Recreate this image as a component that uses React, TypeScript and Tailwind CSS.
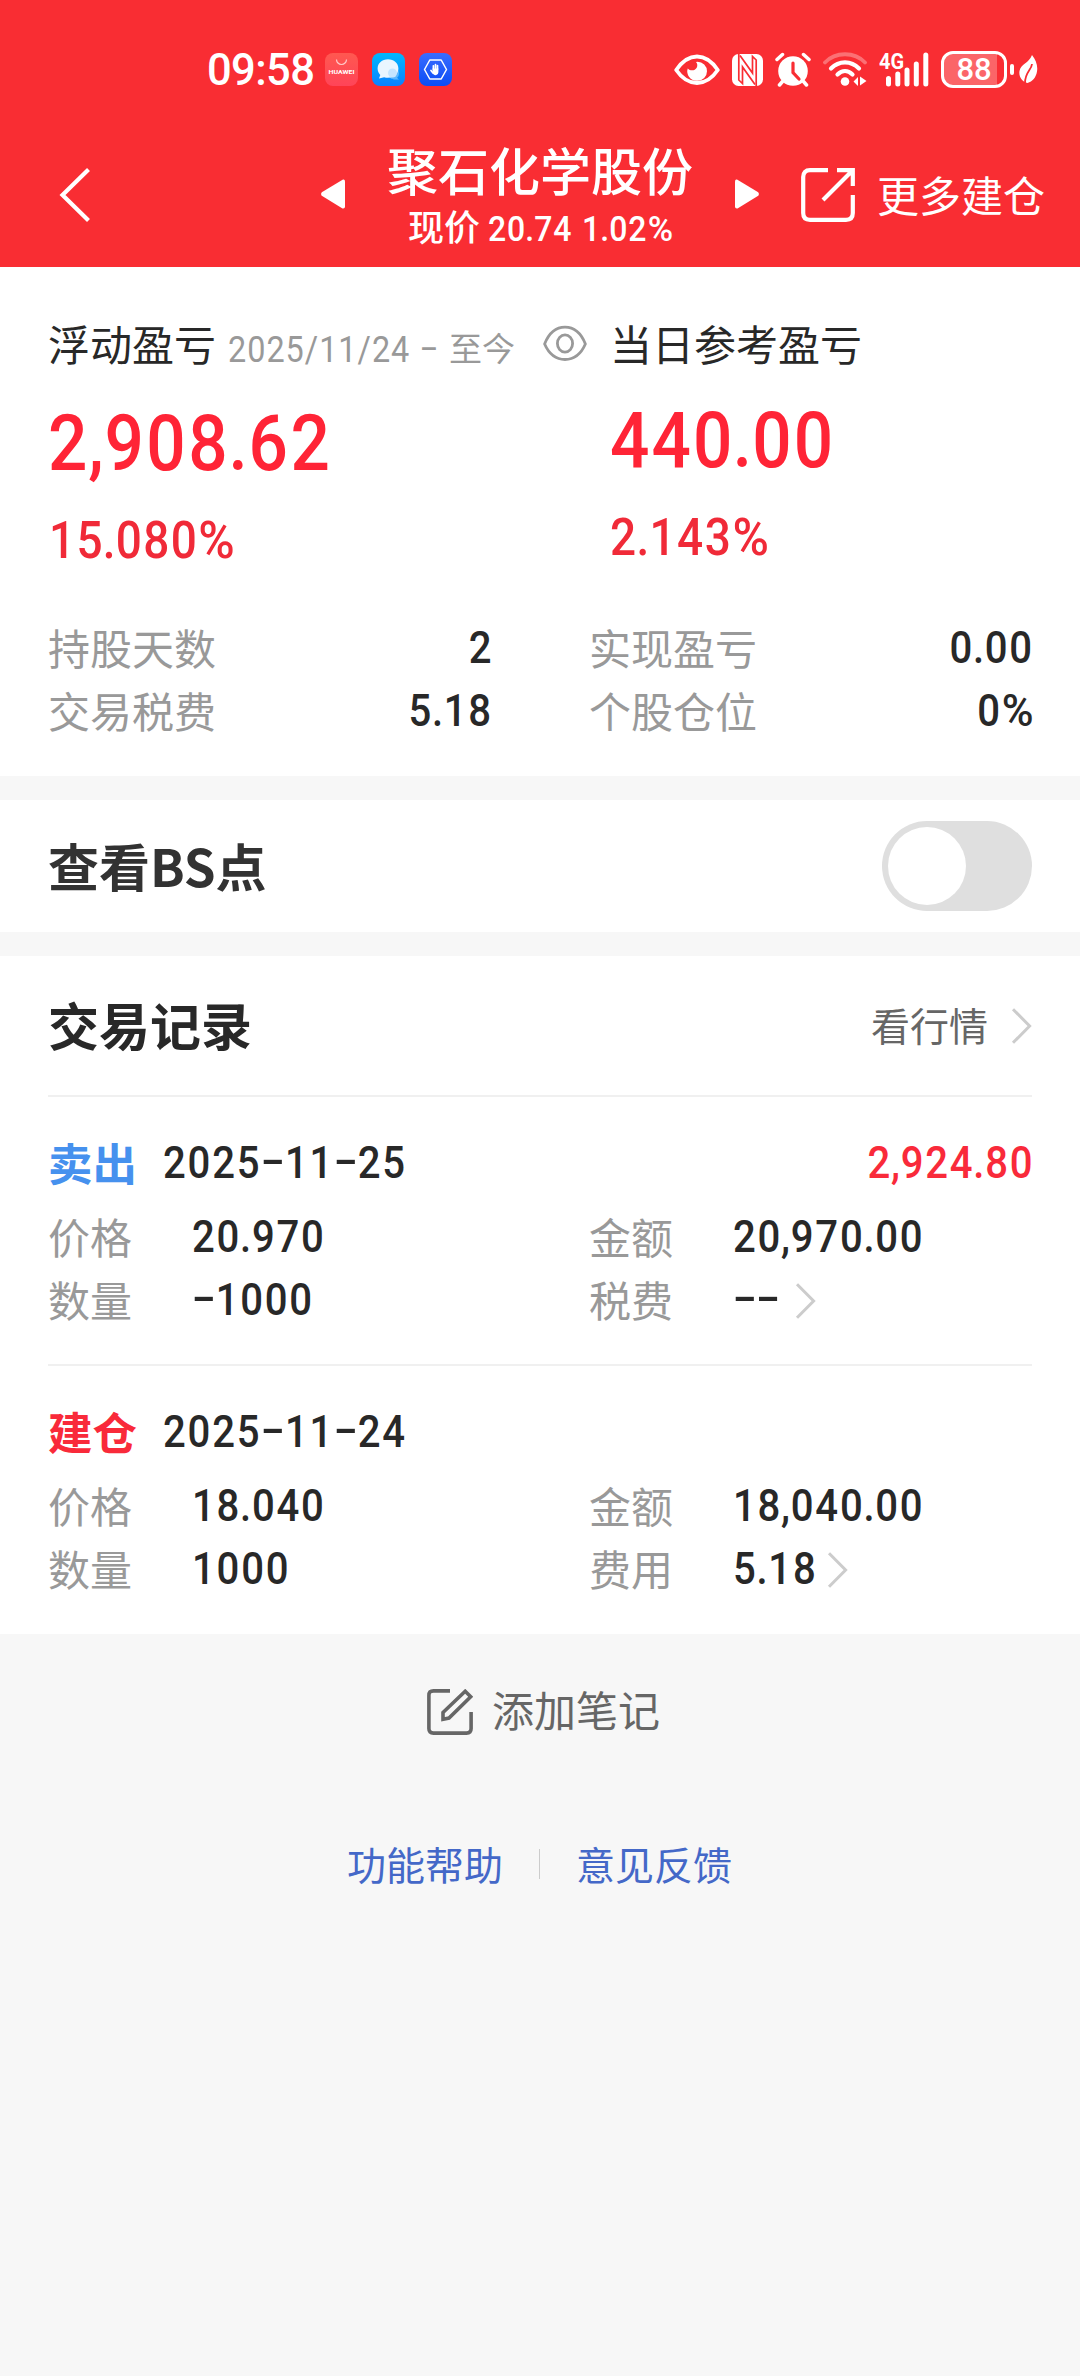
import React from "react";

const CJK = "font-['Noto_Sans_CJK_SC',sans-serif]";

/* Condensed numerals: hyphens take figure width, separators sit tight, percent signs are wide. */
function Num({ children, className = "" }: { children: string; className?: string }) {
  return (
    <span className={`inline-block shrink-0 scale-x-90 whitespace-nowrap font-['Roboto',sans-serif] font-medium ${className}`}>
      {children.split(/([-.,%])/).map((part, i) => {
        if (part === "-") {
          return (
            <span key={i} className="inline-block w-[0.59em] origin-center -translate-y-[0.06em] scale-x-[1.75] text-center tracking-normal">
              -
            </span>
          );
        }
        if (part === "." || part === ",") {
          return (
            <span key={i} className="-mx-[0.027em]">
              {part}
            </span>
          );
        }
        if (part === "%") {
          return (
            <span key={i} className="inline-block w-[0.81em] origin-left scale-x-[1.08] tracking-normal">
              %
            </span>
          );
        }
        return part;
      })}
    </span>
  );
}

function RowNum({ children, right = false, className = "" }: { children: string; right?: boolean; className?: string }) {
  return (
    <Num className={`mt-[3px] text-[44.5px] leading-[63px] tracking-[2px] ${right ? "-mr-[2px] origin-right" : "origin-left"} ${className}`}>
      {children}
    </Num>
  );
}

function Chevron({ className = "" }: { className?: string }) {
  return (
    <svg className={`h-[36px] w-[21px] shrink-0 ${className}`} viewBox="0 0 21 36" fill="none" stroke="#cccccc" strokeWidth="3">
      <path d="M2 1.2 18.6 18 2 34.8" />
    </svg>
  );
}

function StatusBar() {
  return (
    <div className="flex h-[139px] items-center pl-[207px] text-white">
      <span className="mt-[3px] w-[118px] shrink-0 font-['Roboto',sans-serif] text-[43.5px] leading-[44px] font-medium tracking-[-0.6px]">09:58</span>
      <div className="flex gap-[14px]">
        <svg className="h-[33px] w-[33px]" viewBox="0 0 33 33">
          <defs>
            <linearGradient id="store" x1="0" y1="0" x2="0" y2="1">
              <stop offset="0" stopColor="#ff5850" />
              <stop offset="1" stopColor="#ff4458" />
            </linearGradient>
          </defs>
          <rect width="33" height="33" rx="8" fill="url(#store)" />
          <path d="M11.5 6.5a5 5 0 0 0 10 0" fill="none" stroke="#ffc9c9" strokeWidth="1.2" />
          <text x="16.5" y="21" textAnchor="middle" textLength="26" lengthAdjust="spacingAndGlyphs" fill="#fff" fontFamily="Roboto" fontWeight="700" fontSize="5.6">HUAWEI</text>
        </svg>
        <svg className="h-[33px] w-[33px]" viewBox="0 0 33 33">
          <defs>
            <linearGradient id="msg" x1="0" y1="0" x2="0" y2="1">
              <stop offset="0" stopColor="#00b8ff" />
              <stop offset="1" stopColor="#0a80ff" />
            </linearGradient>
          </defs>
          <rect width="33" height="33" rx="8" fill="url(#msg)" />
          <circle cx="21.5" cy="20.5" r="5.5" fill="#5cb8ff" />
          <path d="m24 24 3 2.4-6 .1z" fill="#5cb8ff" />
          <path d="M16 6.2c6 0 10.4 4 10.4 9.3s-4.400 9.300-10.400 9.300c-1.400 0-2.700-.2-3.900-.6L7 25.500l1.300-3.600c-1.700-1.700-2.700-3.900-2.700-6.400 0-5.300 4.400-9.300 10.400-9.300z" fill="#eaf6ff" />
          <circle cx="20.5" cy="20" r="4.5" fill="#c4e5ff" />
        </svg>
        <svg className="h-[33px] w-[33px]" viewBox="0 0 33 33">
          <defs>
            <linearGradient id="guard" x1="0" y1="0" x2="0" y2="1">
              <stop offset="0" stopColor="#3a6cff" />
              <stop offset="1" stopColor="#0a4cf5" />
            </linearGradient>
          </defs>
          <rect width="33" height="33" rx="8" fill="url(#guard)" />
          <path d="M5.5 16.5 10.8 7h11.4l5.3 9.5-5.3 9.5H10.8z" fill="none" stroke="#fff" strokeWidth="1.5" strokeLinejoin="round" />
          <g stroke="#fff" strokeWidth="1.7" strokeLinecap="round">
            <path d="M14.4 16v-3.200M16.500 15.500v-4M18.500 16v-3.300M12 17.500l2 2.500" />
          </g>
          <path d="M13.5 15.5h5.9v3.700a2.900 2.900 0 0 1-5.400 1.500l-.5-1z" fill="#fff" />
        </svg>
      </div>
      <svg className="ml-[222px] h-[32px] w-[46px]" viewBox="0 0 46 32" fill="none" stroke="#fff">
        <path d="M2.2 16C8 7.5 14.5 2.5 23 2.5S38 7.5 43.8 16C38 24.5 31.5 29 23 29S8 24.5 2.2 16z" strokeWidth="3.8" strokeLinejoin="round" />
        <path d="M23.500 7.800a9.500 9.500 0 0 1 0 19h-1a9.500 9.500 0 0 1-8.800-12.400c2.400 2.800 7.300 2.600 9-.6 1.100-2.200.7-4.400-.7-5.900z" fill="#fff" stroke="none" />
      </svg>
      <svg className="ml-[12px] h-[32px] w-[31px]" viewBox="0 0 31 32">
        <rect width="31" height="32" rx="6.5" fill="#fff" />
        <path d="M6.8 0 6.800 26 10.500 29.500V13L23 30.500" fill="none" stroke="#f92d33" strokeWidth="1.700" />
        <path d="M8 1.500 20.500 19V2.500L24.200 6v26" fill="none" stroke="#f92d33" strokeWidth="1.700" />
      </svg>
      <svg className="ml-[12px] h-[35px] w-[36px]" viewBox="0 0 36 35">
        <circle cx="18" cy="19" r="14.8" fill="#fff" />
        <path d="M2 7.5 7.5 2.5M34 7.5 28.5 2.5M7.5 29.5 4.5 33M28.5 29.5l3 3.5" stroke="#fff" strokeWidth="3.5" strokeLinecap="round" />
        <path d="M18 11v9.500l6 6.500" fill="none" stroke="#f92d33" strokeWidth="3.200" strokeLinecap="round" />
      </svg>
      <svg className="ml-[12px] h-[36px] w-[45px]" viewBox="0 0 45 36" fill="none" stroke="#fff" strokeLinecap="round">
        <path d="M2 10.5C12.5-.5 31.5-.5 42 10.5" strokeWidth="3.8" opacity=".32" />
        <path d="M8 16.500c8-8.200 20-8.200 28 0" strokeWidth="4.200" />
        <path d="M14.500 22.500c4.600-4.500 10.400-4.500 15 0" strokeWidth="4.200" />
        <circle cx="22" cy="29.5" r="4.3" fill="#fff" stroke="none" />
        <path d="M30.500 29.500 35 25v9zM37 24.500v9l6.500-4.500z" fill="#fff" stroke="none" />
      </svg>
      <svg className="ml-[11px] h-[52px] w-[51px]" viewBox="0 -8 51 52">
        <text x="0" y="17" textLength="25" lengthAdjust="spacingAndGlyphs" fill="#fff" fontFamily="Roboto" fontWeight="700" fontSize="22">4G</text>
        <path d="M9.500 26.500v5.500M18.800 22v10M28 18v14M37.300 12v20M46.800 3v29" stroke="#fff" strokeWidth="5" strokeLinecap="round" />
      </svg>
      <div className="ml-[11px] flex h-[37px] w-[66px] items-center justify-center rounded-[12px] border-[3px] border-white bg-linear-to-r from-[#fb6568] from-88% to-[#f92d33] to-88% font-['Roboto',sans-serif] text-[31px] leading-[31px] font-medium">
        88
      </div>
      <div className="ml-[3px] h-[11px] w-[4px] rounded-[2px] bg-white" />
      <svg className="ml-[5px] h-[29px] w-[19px]" viewBox="0 0 19 29">
        <path d="M13 0c4 5 6 10.500 5 16.500-1 6-4.500 10-9.500 11.500C3.500 27-.5 22 .5 16 1.500 9 10 8.500 13 0z" fill="#fff" />
        <path d="M13 9c-.5 6-7 8-7 19" fill="none" stroke="#f92d33" strokeWidth="1.800" />
      </svg>
    </div>
  );
}

function NavBar() {
  return (
    <div className="flex h-[128px] items-start text-white">
      <svg className="mt-[29px] ml-[59px] h-[54px] w-[31px] shrink-0" viewBox="0 0 31 54" fill="none" stroke="#fff" strokeWidth="4.2">
        <path d="M29.5 1.5 3.5 27l26 25.5" />
      </svg>
      <svg className="mt-[40px] ml-[231px] h-[30px] w-[24px] shrink-0" viewBox="0 0 24 30" fill="#fff">
        <path d="M22 .5q2-.5 2 2v25q0 2.500-2.500 2L.8 16.800Q-.6 15 .8 13.200z" />
      </svg>
      <div className="ml-[42px] flex w-[306px] shrink-0 flex-col items-center">
        <div className={`h-[60px] text-[51px] leading-[60px] font-medium whitespace-nowrap ${CJK}`}>聚石化学股份</div>
        <div className="mt-[4px] flex h-[48px] w-full items-start pl-[21px]">
          <span className={`w-[80px] shrink-0 text-[36px] leading-[44px] font-medium ${CJK}`}>现价</span>
          <Num className="mt-[4px] w-[94px] origin-left text-[35.5px] leading-[44px] tracking-[1px]">20.74</Num>
          <Num className="mt-[4px] origin-left text-[35.5px] leading-[44px] tracking-[1px]">1.02%</Num>
        </div>
      </div>
      <svg className="mt-[40px] ml-[42px] h-[30px] w-[24px] shrink-0" viewBox="0 0 24 30" fill="#fff">
        <path d="M2 .5q-2-.5-2 2v25q0 2.500 2.500 2l20.700-12.700q1.400-1.800 0-3.600z" />
      </svg>
      <svg className="mt-[29px] ml-[42px] h-[54px] w-[54px] shrink-0" viewBox="0 0 54 54" fill="none" stroke="#fff" strokeWidth="4.2">
        <path d="M27 2.200H9q-6.800 0-6.800 6.800v36q0 6.800 6.800 6.800h36q6.800 0 6.800-6.800V27" />
        <path d="M36 2.200h15.800V18M51.500 2.500 22 32" />
      </svg>
      <div className={`ml-[22px] h-[60px] pt-[25px] text-[42px] leading-[60px] whitespace-nowrap ${CJK}`}>更多建仓</div>
    </div>
  );
}

function Stat({ label, value }: { label: string; value: string }) {
  return (
    <div className="flex h-[63px] items-center justify-between">
      <span className="text-[42px] leading-[63px] text-[#999999]">{label}</span>
      <RowNum right>{value}</RowNum>
    </div>
  );
}

function Summary() {
  return (
    <section className="h-[509px] bg-white px-[48px] pt-[46px]">
      <div className="flex">
        <div className="w-[562px] shrink-0">
          <div className="flex h-[60px] items-center">
            <span className="w-[180px] shrink-0 text-[42px] leading-[60px]">浮动盈亏</span>
            <Num className="w-[187px] origin-left pt-[13px] text-[36px] leading-[48px] font-normal! tracking-[1.1px] text-[#999999]">2025/11/24</Num>
            <span className="w-[28px] shrink-0 pt-[10px] text-center font-['Roboto',sans-serif] text-[36px] leading-[48px] text-[#999999]">
              <span className="inline-block scale-x-[1.6]">-</span>
            </span>
            <span className="ml-[6px] w-[94px] shrink-0 pt-[7px] text-[33px] leading-[48px] text-[#999999]">至今</span>
            <svg className="h-[36px] w-[44px] shrink-0" viewBox="0 0 44 36" fill="none" stroke="#999999" strokeWidth="2.8">
              <path d="M1.6 19C6 8 13 2.2 22 2.2S38 8 42.4 19C38 29 31 34.5 22 34.5S6 29 1.6 19z" strokeLinejoin="round" />
              <ellipse cx="22" cy="18.5" rx="7.6" ry="8.6" />
            </svg>
          </div>
          <Num className="mt-[29px] block! h-[84px] origin-left text-[77px] leading-[84px] tracking-[2.9px] text-[#ff2436]">2,908.62</Num>
          <Num className="mt-[25px] block! h-[60px] origin-left pl-[1px] text-[51px] leading-[60px] tracking-[1.6px] text-[#f02a38]">15.080%</Num>
        </div>
        <div>
          <div className="h-[60px] text-[42px] leading-[60px] whitespace-nowrap">当日参考盈亏</div>
          <Num className="mt-[26px] block! h-[84px] origin-left text-[77px] leading-[84px] tracking-[2.4px] text-[#ff2436]">440.00</Num>
          <Num className="mt-[25px] block! h-[60px] origin-left text-[51px] leading-[60px] tracking-[1.7px] text-[#f02a38]">2.143%</Num>
        </div>
      </div>
      <div className="mt-[44px] grid grid-cols-[443px_443px] gap-x-[98px]">
        <Stat label="持股天数" value="2" />
        <Stat label="实现盈亏" value="0.00" />
        <Stat label="交易税费" value="5.18" />
        <Stat label="个股仓位" value="0%" />
      </div>
    </section>
  );
}

function Field({ label, value, arrow = false }: { label: string; value: string; arrow?: boolean }) {
  return (
    <div className="flex h-[63px] items-center">
      <span className="w-[144px] shrink-0 text-[42px] leading-[63px] text-[#999999]">{label}</span>
      <RowNum>{value}</RowNum>
      {arrow && <Chevron className={value === "--" ? "mt-[4px] ml-[9px]" : "mt-[5px]"} />}
    </div>
  );
}

interface Trade {
  kind: string;
  color: string;
  date: string;
  profit?: string;
  fields: { label: string; value: string; arrow?: boolean }[];
}

const trades: Trade[] = [
  {
    kind: "卖出",
    color: "text-[#4691ee]",
    date: "2025-11-25",
    profit: "2,924.80",
    fields: [
      { label: "价格", value: "20.970" },
      { label: "金额", value: "20,970.00" },
      { label: "数量", value: "-1000" },
      { label: "税费", value: "--", arrow: true },
    ],
  },
  {
    kind: "建仓",
    color: "text-[#f92a3a]",
    date: "2025-11-24",
    fields: [
      { label: "价格", value: "18.040" },
      { label: "金额", value: "18,040.00" },
      { label: "数量", value: "1000" },
      { label: "费用", value: "5.18", arrow: true },
    ],
  },
];

function TradeRecord({ trade }: { trade: Trade }) {
  return (
    <div className="h-[269px] border-t-2 border-[#f0f0f0] pt-[32px]">
      <div className="flex h-[66px] items-center">
        <span className={`w-[115px] shrink-0 text-[44.5px] leading-[66px] font-bold ${trade.color}`}>{trade.kind}</span>
        <RowNum>{trade.date}</RowNum>
        {trade.profit && (
          <RowNum right className="ml-auto text-[#f92a3a]">
            {trade.profit}
          </RowNum>
        )}
      </div>
      <div className="mt-[9px] grid grid-cols-[443px_443px] gap-x-[98px]">
        {trade.fields.map((f) => (
          <Field key={f.label} {...f} />
        ))}
      </div>
    </div>
  );
}

export default function App() {
  return (
    <div className={`min-h-[2376px] w-[1080px] bg-[#f7f7f7] text-[#282828] ${CJK}`}>
      <header className="h-[267px] bg-[#f92d33]">
        <StatusBar />
        <NavBar />
      </header>
      <Summary />
      <section className="mt-[24px] flex h-[132px] items-center justify-between bg-white px-[48px]">
        <h2 className="-mt-[3px] text-[51px] leading-[72px] font-bold text-[#323232]">查看BS点</h2>
        <div className="h-[90px] w-[150px] rounded-full bg-[#dfdfdf] p-[6px]">
          <div className="h-[78px] w-[78px] rounded-full bg-white" />
        </div>
      </section>
      <section className="mt-[24px] h-[678px] bg-white px-[48px]">
        <div className="mb-[3px] flex h-[136px] items-center">
          <h2 className="text-[51px] leading-[72px] font-bold">交易记录</h2>
          <span className="mr-[23px] ml-auto text-[39px] leading-[60px] text-[#666666]">看行情</span>
          <Chevron className="mt-[4px]" />
        </div>
        {trades.map((t) => (
          <TradeRecord key={t.date} trade={t} />
        ))}
      </section>
      <div className="flex h-[108px] items-center pt-[48px] pl-[427px] text-[#666666]">
        <svg className="h-[46px] w-[46px] shrink-0" viewBox="0 0 46 46" fill="none" stroke="#666666" strokeWidth="3.6">
          <path d="M23 1.900H6.500Q1.900 1.900 1.900 6.500v33q0 4.600 4.600 4.600h33q4.600 0 4.600-4.600V23" />
          <path d="M16 30.200v-6.700L38.200 2.300l5.500 5.500L22 29z" />
        </svg>
        <span className="mb-[6px] ml-[19px] text-[42px] leading-[54px]">添加笔记</span>
      </div>
      <div className="mt-[102px] flex h-[40px] items-center pl-[347px] text-[39px] leading-[40px] text-[#4468c8]">
        <span className="-mt-[3px] w-[192px] shrink-0">功能帮助</span>
        <span className="h-[30px] w-px bg-[#cccccc]" />
        <span className="-mt-[3px] ml-[36px]">意见反馈</span>
      </div>
    </div>
  );
}
